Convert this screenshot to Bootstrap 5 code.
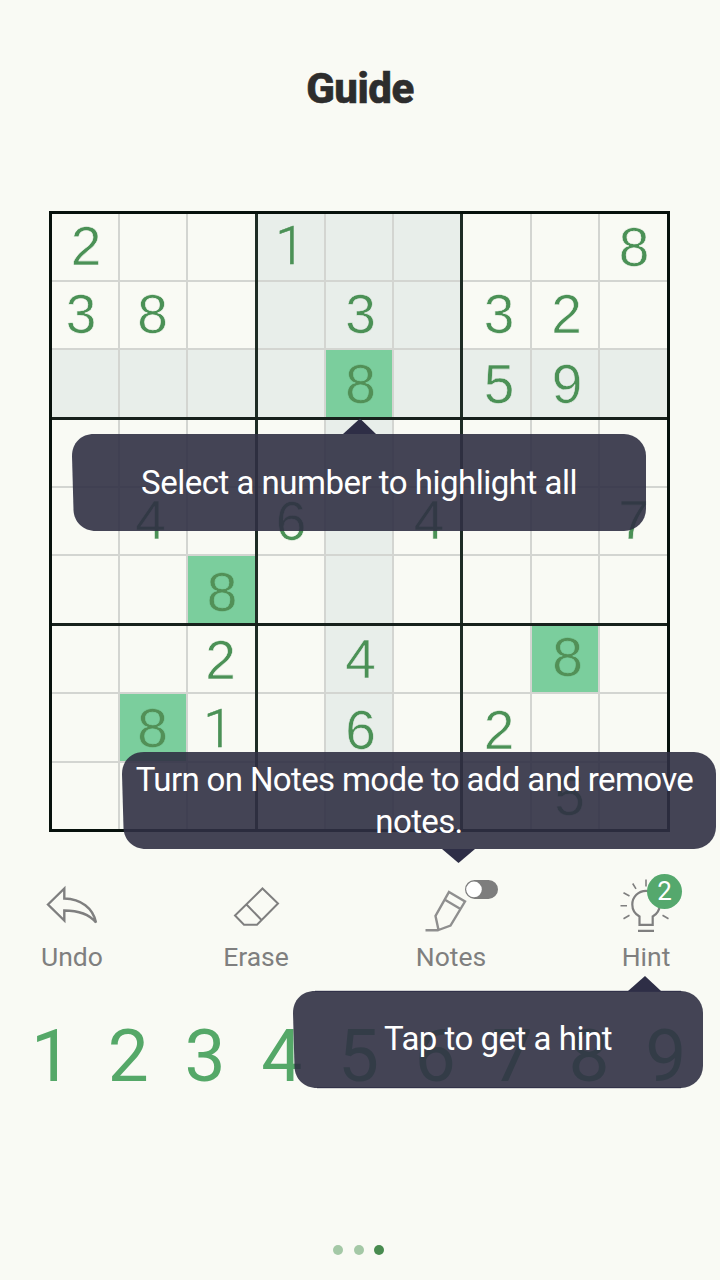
<!DOCTYPE html>
<html lang="en">
<head>
<meta charset="utf-8">
<meta name="viewport" content="width=device-width, initial-scale=1">
<title>Guide</title>
<link href="https://cdn.jsdelivr.net/npm/bootstrap@5.3.0/dist/css/bootstrap.min.css" rel="stylesheet">
<style>
  body { background: #f9faf4; font-family: Roboto, sans-serif; overflow: hidden; }
  .guide-screen { width: 720px; height: 1280px; }
  .guide-title { height: 211px; padding-top: 64px; font-size: 42px; line-height: 50px; font-weight: 800; color: #2d2d2d; letter-spacing: -.5px; -webkit-text-stroke: .6px #2d2d2d; }
  .sudoku {
    display: grid; width: 621px; height: 621px; margin-left: 49px; border: 3px solid #07110c;
    grid-template-columns: 68px 68px 70px 68px 68px 69px 69px 68px 67px;
    grid-template-rows: 68px 68px 70px 68px 68px 70px 68px 69px 66px;
  }
  .cell {
    --bg: #f9faf4; --right: inset -2px 0 #d3d5d1; --bottom: inset 0 -2px #d3d5d1;
    background: var(--bg); padding: 0 2px 2px 0; min-width: 0; min-height: 0;
    box-shadow: var(--right), var(--bottom);
  }
  .cell.tint { --bg: #e8eeea; }
  .cell.same { --bg: #7bce9d; }
  .cell.end-r { --right: inset 0 0 transparent; padding-right: 0; }
  .cell.end-b { --bottom: inset 0 0 transparent; padding-bottom: 0; }
  .cell.box-r { --right: inset -3px 0 #1e2c25; padding-right: 3px; }
  .cell.box-b { --bottom: inset 0 -3px #17211c; padding-bottom: 3px; box-shadow: var(--bottom), var(--right); }
  .digit { font: 55px/60px "Liberation Sans", sans-serif; color: #4b9156; -webkit-text-stroke: .6px var(--bg); }
  .same .digit { color: #529057; }
  .digit.one { font-family: Roboto, sans-serif; font-size: 53.5px; font-weight: 300; -webkit-text-stroke: .5px #4b9156; }
  .tools { height: 112px; margin-top: 37px; }
  .tool { width: 120px; color: #7f7f7f; font-size: 26.5px; line-height: 32px; }
  .tool svg { display: block; width: 120px; height: 72px; }
  .count { left: 61px; top: 5px; width: 35px; height: 35px; background: #55a86d; color: #fff; font-size: 26px; line-height: 34px; }
  .pad { height: 86px; margin: 32px 15px 0 13px; color: #55a868; font-size: 73px; line-height: 86px; }
  .pad span { width: 76.8px; text-align: center; }
  .dots { margin-top: 145.5px; gap: 10.4px; padding-right: 3px; }
  .dots i { width: 10px; height: 10px; border-radius: 50%; background: #a4c8a6; }
  .dots i.on { background: #488b4f; }
  .tip { color: #fff; font-size: 33px; line-height: 42px; letter-spacing: -.5px; text-align: center; height: 97px; }
  .tip svg { left: 0; top: 0; overflow: visible; }
  .tip .bubble { fill: #303044; fill-opacity: .9; }
  .tip .arrow { fill: #2e2e46; }
  .tip-select { left: 72px; top: 434px; width: 574px; }
  .tip-notes { left: 122px; top: 752px; width: 594px; letter-spacing: -.63px; }
  .tip-notes .line-one { display: block; margin-right: 9px; white-space: nowrap; }
  .tip-hint { left: 293px; top: 990.5px; width: 410px; }
</style>
</head>
<body>
<main class="guide-screen position-relative d-flex flex-column">
  <h1 class="guide-title text-center m-0">Guide</h1>
  <section class="sudoku" id="board"></section>

  <nav class="tools d-flex position-relative">
    <div class="tool text-center position-relative" style="margin-left:12px">
      <svg viewBox="12 869 120 72" fill="none" stroke="#7f7f7f" stroke-width="2.4"><path d="M48 904.5 64.3 888.5V898.5C81 899 93 908 96 922.5C89 914 77 910.5 64.3 910.5V920.5Z"/></svg>Undo
    </div>
    <div class="tool text-center position-relative" style="margin-left:64px">
      <svg viewBox="196 869 120 72" fill="none" stroke="#7f7f7f" stroke-width="2"><path d="M262.5 888.5 278 903.5 257 924.7H244L235 915.5ZM246.5 904.5 261.5 920"/></svg>Erase
    </div>
    <div class="tool text-center position-relative" style="margin-left:75px">
      <svg viewBox="391 869 120 72" fill="none" stroke="#8f8f8f" stroke-width="2.4"><path d="M449 892 465 901.5 450.5 925.5 438.5 930 435.5 916ZM444.5 899.5 460.5 909M425.5 930.2H438.5"/><rect x="466" y="880.9" width="31" height="17" rx="8.5" fill="#7d7d7d" stroke="#7d7d7d" stroke-width="2"/><circle cx="474" cy="889.4" r="7.8" fill="#fff" stroke="none"/></svg>Notes
    </div>
    <div class="tool text-center position-relative" style="margin-left:75px">
      <svg viewBox="586 869 120 72" fill="none" stroke="#7f7f7f" stroke-width="2.2"><path d="M639.5 924.8V916.5C634 913.5 632.3 909 632.3 904.5A13.6 13.6 0 0 1 659.7 904.5C659.7 909 658 913.5 652.7 916.5V924.8ZM638 930.8H654"/><path stroke-width="1.6" d="M646 879.5V886.5M632.7 883.5 636 888.8M623.5 892.7 629.5 896M620.5 905.7H627M623.5 918.7 629.5 915.2M662.5 915.2 668.5 918.7"/></svg>Hint
      <span class="count position-absolute rounded-circle text-center">2</span>
    </div>
  </nav>

  <div class="pad d-flex"><span>1</span><span>2</span><span>3</span><span>4</span><span>5</span><span>6</span><span>7</span><span>8</span><span>9</span></div>
  <div class="dots d-flex justify-content-center"><i></i><i></i><i class="on"></i></div>

  <div class="tip tip-select position-absolute d-flex align-items-center justify-content-center">
    <svg class="position-absolute" width="574" height="97"><path class="bubble" d="M22 0H552A22 22 0 0 1 574 22V75A22 22 0 0 1 552 97H24C11 97 2 88 1.5 76L0 22C0 9 9 0 22 0Z"/><path class="arrow" d="M271 0 288 -15.5 304 0Z"/></svg>
    <span class="position-relative">Select a number to highlight all</span>
  </div>
  <div class="tip tip-notes position-absolute d-flex align-items-center justify-content-center">
    <svg class="position-absolute" width="594" height="97"><path class="bubble" d="M22 0H572A22 22 0 0 1 594 22V75A22 22 0 0 1 572 97H24C11 97 2 88 1.5 76L0 22C0 9 9 0 22 0Z"/><path class="arrow" d="M320 97 336.5 111 353 97Z"/></svg>
    <span class="position-relative w-100"><span class="line-one">Turn on Notes mode to add and remove</span>notes.</span>
  </div>
  <div class="tip tip-hint position-absolute d-flex align-items-center justify-content-center">
    <svg class="position-absolute" width="410" height="97"><path class="bubble" d="M22 0H388A22 22 0 0 1 410 22V75A22 22 0 0 1 388 97H24C11 97 2 88 1.5 76L0 22C0 9 9 0 22 0Z"/><path d="M22 .3H388M24 96.7H388" stroke="#2e2e46" stroke-width="1"/><path class="arrow" d="M335 0 352 -15 368 0Z"/></svg>
    <span class="position-relative">Tap to get a hint</span>
  </div>
</main>
<script src="https://cdn.jsdelivr.net/npm/bootstrap@5.3.0/dist/js/bootstrap.bundle.min.js"></script>
<script>
  // Each given: row, column, digit, and its nudge from the cell's centre.
  const givens = [
    [0,0,2,1,-1],[0,3,1,-1,-1],[0,8,8,.5,0],
    [1,0,3,-4,-1],[1,1,8,-.5,-1],[1,4,3,1.5,-1],[1,6,3,2.5,-1],[1,7,2,1.5,-1],
    [2,4,8,1.5,-.5],[2,6,5,2.5,-.5],[2,7,9,2,-.5],
    [4,1,4,-2.5,-1],[4,3,6,0,0],[4,5,4,2,-1],[4,8,7,0,-1],
    [5,2,8,.5,2],
    [6,2,2,-1,1],[6,4,4,1.5,0],[6,7,8,2.5,-2],
    [7,1,8,-.5,0],[7,2,1,-3.5,1],[7,4,6,1.5,2],[7,6,2,2.5,1.5],
    [8,7,5,4.5,0]
  ];
  const board = document.getElementById('board');
  for (let r = 0; r < 9; r++) for (let c = 0; c < 9; c++) {
    const g = givens.find(v => v[0] === r && v[1] === c);
    const cell = document.createElement('div');
    cell.className = 'cell d-flex align-items-center justify-content-center';
    if (r === 2 || c === 4 || (r < 3 && c > 2 && c < 6)) cell.classList.add('tint');
    if (g && g[2] === 8 && r > 1) cell.classList.add('same');
    if (c === 2 || c === 5) cell.classList.add('box-r');
    if (r === 2 || r === 5) cell.classList.add('box-b');
    if (c === 8) cell.classList.add('end-r');
    if (r === 8) cell.classList.add('end-b');
    if (g) cell.innerHTML = `<span class="digit${g[2] === 1 ? ' one' : ''}" style="transform:translate(${g[3]}px,${g[4]}px)">${g[2]}</span>`;
    board.append(cell);
  }
</script>
</body>
</html>
